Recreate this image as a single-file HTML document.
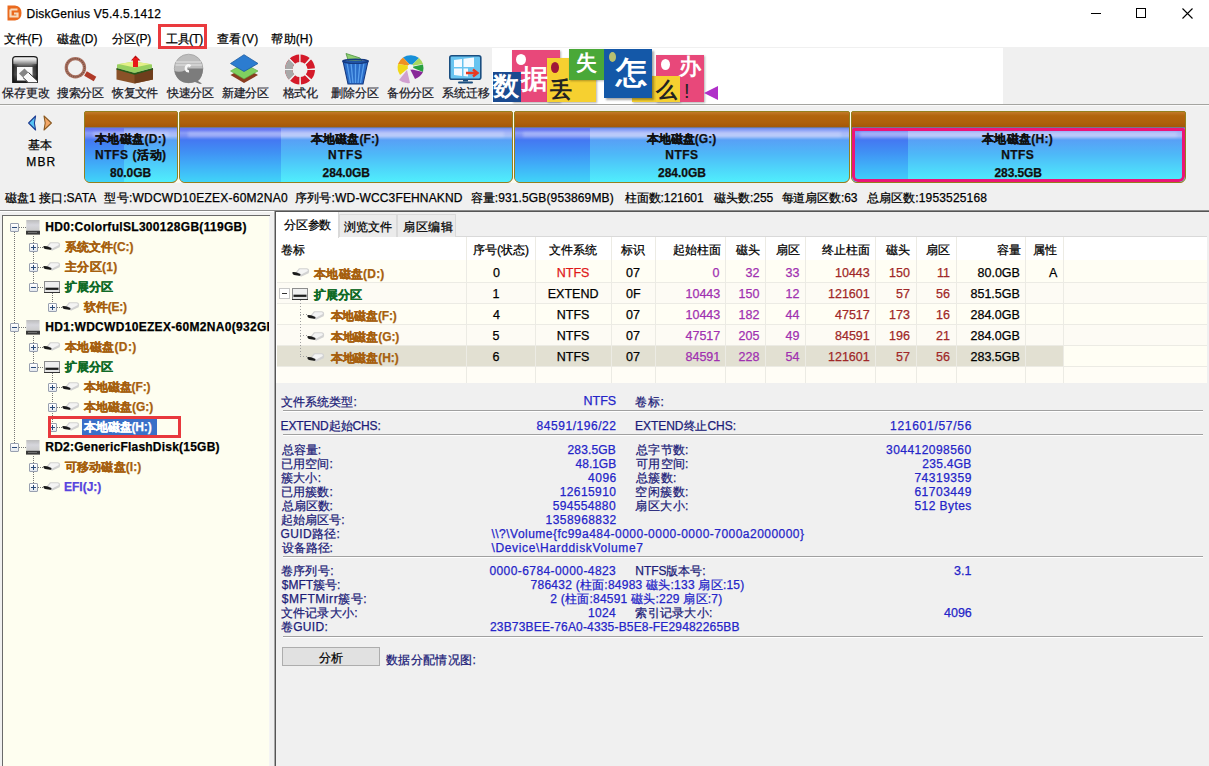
<!DOCTYPE html>
<html><head><meta charset="utf-8">
<style>
*{box-sizing:border-box;margin:0;padding:0}
html,body{width:1209px;height:766px;overflow:hidden;background:#f0f0f0;font-family:"Liberation Sans",sans-serif;font-size:12px;color:#000}
body{position:relative}
.a{position:absolute}
.t{position:absolute;white-space:nowrap;line-height:14px;font-size:12px;-webkit-text-stroke:0.25px currentColor}
svg{position:absolute;overflow:visible}
.part{position:absolute;top:111px;height:72px;border:1px solid #94801e;border-radius:2px 2px 6px 6px;overflow:hidden;background:#b6650f}
.part .hd{position:absolute;left:0;top:0;right:0;height:16px;background:linear-gradient(#c27a2a,#b2660e 25%,#ae600c 70%,#a45808);border-bottom:1px solid #707890}
.part .bd{position:absolute;left:0;top:16px;right:0;bottom:0;background:linear-gradient(#7088e8 0px,#8aa0f6 2px,#a8b8f8 5px,#a8c0f8 8px,#58a0f6 12px,#4eb8f8 26px,#4ed4fa 40px,#50eefc 54px)}
.part .used{position:absolute;left:0;top:16px;bottom:0;background:linear-gradient(#6870ee 0px,#6a7af2 2px,#8a9cf6 5px,#7a90f4 8px,#4478f2 12px,#4090f4 24px,#40b0f8 38px,#40d4f8 54px)}
.part .hl{position:absolute;left:8px;right:8px;top:20px;height:5px;background:rgba(220,230,255,.35);filter:blur(1.5px)}
.row{position:absolute;left:277px;width:930px;height:21px}
.vl{position:absolute;width:1px;background:#ecebe4}
.hl1{position:absolute;height:1px;background:#ecebe4}
.etch{position:absolute;left:283px;width:920px;height:2px;border-top:1px solid #a0a0a0;border-bottom:1px solid #fff}
.xb{position:absolute;width:9px;height:9px;border:1px solid #98a0b0;background:linear-gradient(#fff,#e4e8ee);border-radius:1px}
.xb:before{content:"";position:absolute;left:1px;top:3px;width:5px;height:1px;background:#2a4a78}
.xb.p:after{content:"";position:absolute;left:3px;top:1px;width:1px;height:5px;background:#2a4a78}
.dv{position:absolute;width:1px;background-image:linear-gradient(#777 50%,transparent 50%);background-size:1px 2px}
.dh{position:absolute;height:1px;background-image:linear-gradient(90deg,#777 50%,transparent 50%);background-size:2px 1px}
</style></head><body>
<!-- title + menu -->
<div class="a" style="left:0;top:0;width:1209px;height:47px;background:#fff"></div>
<svg style="left:7px;top:5px" width="15" height="16" viewBox="0 0 15 16">
<path d="M0.5 0.5 H8 Q14.5 1 14.5 8 Q14.5 15 8 15.5 H0.5 Z" fill="#ea6a1e"/>
<path d="M3.5 4.5 H10.5 M3.5 4.5 V11.5 H10.5 V8.5 H7" stroke="#f6dcc0" stroke-width="2.2" fill="none"/>
</svg>
<div class="a" style="left:1091px;top:13px;width:10px;height:1px;background:#000"></div>
<div class="a" style="left:1136px;top:8px;width:10px;height:10px;border:1px solid #000"></div>
<svg style="left:1182px;top:8px" width="11" height="11"><path d="M0.5 0.5 L10.5 10.5 M10.5 0.5 L0.5 10.5" stroke="#000" stroke-width="1.1"/></svg>
<div class="a" style="left:158px;top:24px;width:49px;height:25px;border:3px solid #ea3a3e"></div>

<!-- toolbar -->
<div class="a" style="left:0;top:104px;width:1209px;height:1px;background:#a4a4a0"></div>
<div class="a" style="left:0;top:105px;width:1209px;height:1px;background:#fafafa"></div>
<!-- save -->
<svg style="left:12px;top:56px" width="26" height="27" viewBox="0 0 26 27">
<defs><linearGradient id="gs" x1="0" y1="0" x2="0" y2="1"><stop offset="0" stop-color="#fafafa"/><stop offset=".12" stop-color="#e0e0e0"/><stop offset=".38" stop-color="#505050"/><stop offset=".7" stop-color="#6a6a6a"/><stop offset="1" stop-color="#202020"/></linearGradient>
<linearGradient id="gs2" x1="0" y1="0" x2="1" y2="0"><stop offset="0" stop-color="#000" stop-opacity=".5"/><stop offset=".25" stop-color="#000" stop-opacity="0"/><stop offset=".75" stop-color="#000" stop-opacity="0"/><stop offset="1" stop-color="#000" stop-opacity=".5"/></linearGradient></defs>
<path d="M0.7 3.2 Q0.7 0.7 3.5 0.7 H21.8 Q25.3 0.7 25.3 3.2 V26.3 H0.7 Z" fill="url(#gs)" stroke="#1a1a1a" stroke-width="1.2"/>
<rect x="1" y="8" width="24" height="18" fill="url(#gs2)"/>
<rect x="5" y="11" width="15.5" height="13.5" fill="#f8f8f8"/>
<path d="M7 17.5 L12.5 12.5 L16.5 16.5 L11 21.5 Z" fill="#858585"/>
<path d="M11 21.5 L16.5 16.5 L25 24.5 V26.3 H15.5 Z" fill="#fafafa"/>
<path d="M16.5 16.5 L25 24.5 M11 21.5 L15.8 26" stroke="#2a2a2a" stroke-width="1"/>
</svg>
<!-- search -->
<svg style="left:64px;top:56px" width="33" height="26" viewBox="0 0 33 26">
<circle cx="11.4" cy="11.7" r="9.1" fill="none" stroke="#a87060" stroke-width="3.3"/>
<circle cx="11.4" cy="11.7" r="9.1" fill="none" stroke="#704838" stroke-width="1.2" stroke-dasharray="1 1.2"/>
<path d="M21.5 17.5 L31 23" stroke="#b03a28" stroke-width="5.2"/>
</svg>
<!-- recover -->
<svg style="left:116px;top:55px" width="38" height="30" viewBox="0 0 38 30">
<path d="M0.5 13.5 L18.5 18.5 L37 13.5 V24.5 L18.5 28.5 L0.5 24.5 Z" fill="#8a5228"/>
<path d="M18.5 18.5 L37 13.5 V24.5 L18.5 28.5 Z" fill="#6e3e1c"/>
<path d="M1 9.5 L18 6.5 L36 9.5 L36 13 L18.5 18 L1 13 Z" fill="#98d060"/>
<path d="M2.5 9 L18 6.5 L35 9 L18.5 12.5 Z" fill="#e4f088"/>
<path d="M0.5 13.8 L18.5 18.8 L37 13.8" fill="none" stroke="#245a18" stroke-width="1.6"/>
<path d="M15 5.5 L19.5 0.5 L24.5 5.5 Z" fill="#b81010"/>
<rect x="17" y="3" width="5" height="9" fill="#e81818"/>
</svg>
<!-- quick -->
<svg style="left:174px;top:54px" width="31" height="31" viewBox="0 0 31 31">
<circle cx="14.6" cy="14.5" r="14.3" fill="#bdbdbd" stroke="#a0a0a0" stroke-width=".8"/>
<path d="M2 8 H27 M1.5 11 H28" stroke="#d8d8d8" stroke-width="1.5"/>
<path d="M0.5 17 Q3 18 8 17.5 L12 16 V14.5 H29 Q29 23 24 27 L28 29.5 L26 30 L21 28 Q18 29 14.6 29 Q3 29 0.5 17 Z" fill="#7c7c7c"/>
<path d="M16.5 12.2 Q15 11 13.5 11.5 Q11.5 12.5 12 15.5 Q12.8 17.5 15 17.2" fill="none" stroke="#f8f8f8" stroke-width="2.5"/>
</svg>
<!-- new -->
<svg style="left:230px;top:54px" width="29" height="30" viewBox="0 0 29 30">
<path d="M14 13.5 L28 21 L14 29 L0.5 21 Z" fill="#8a3c20"/>
<path d="M14 9.5 L28 17 L14 25 L0.5 17 Z" fill="#80d060" stroke="#58a840" stroke-width=".6"/>
<path d="M14 0.7 L28 9.5 L14 17.5 L0.5 9.5 Z" fill="#2c7cd0" stroke="#1a5aa0" stroke-width=".8"/>
</svg>
<!-- format -->
<svg style="left:284px;top:54px" width="32" height="32" viewBox="0 0 32 32">
<g transform="rotate(-90 16 15.5)">
<circle cx="16" cy="15.5" r="11.3" fill="none" stroke="#d41a2a" stroke-width="7.4" stroke-dasharray="7.87 1"/>
</g>
<path d="M4.7 15.5 A11.3 11.3 0 0 1 8 7.5 M4.7 15.5 A11.3 11.3 0 0 0 8 23.5" fill="none" stroke="#a8a8a8" stroke-width="7.4"/>
<path d="M16 0 V31 M0.5 15.5 H31.5 M5 4.5 L27 26.5 M27 4.5 L5 26.5" stroke="#f0f0f0" stroke-width="1.1"/>
</svg>
<!-- delete -->
<svg style="left:342px;top:53px" width="27" height="32" viewBox="0 0 27 32">
<path d="M4 0.5 L18 5 L21 10 L7 10 Z" fill="#90d070" stroke="#4a9040" stroke-width=".8"/>
<path d="M1 8 H26 L21 31 H6 Z" fill="#2a6cc8"/>
<path d="M5 10 L8.5 30 M9 10 L11 30 M13.5 10 V30 M18 10 L16 30 M22 10 L18.5 30" stroke="#5aa0ec" stroke-width="1.3"/>
<path d="M1 8 H26 L21 31 H6 Z" fill="none" stroke="#163a80" stroke-width="1.1"/>
<ellipse cx="13.5" cy="8.3" rx="12.6" ry="2" fill="none" stroke="#163a80" stroke-width="1.6"/>
</svg>
<!-- backup -->
<svg style="left:396px;top:55px" width="29" height="30" viewBox="0 0 29 30">
<path d="M15 11 L7 2.5 A14 14 0 0 1 23 3 Z" fill="#1890d8"/>
<path d="M15 11 L7 2.5 A14 14 0 0 0 2 9 Z" fill="#f09020"/>
<path d="M15 11 L2 9 A14 14 0 0 0 4 20 Z" fill="#f0d818"/>
<path d="M15 11 L23 3 A14 14 0 0 1 27 9 Z" fill="#a8d860"/>
<path d="M15 12 L27 9.5 A14 14 0 0 1 27 17 Z" fill="#28a040"/>
<path d="M14 14 L27 17 A14 14 0 0 1 19 24 Z" fill="#882898"/>
<path d="M11 15 L14 28 A14 14 0 0 1 3 25 Z" fill="#d0a0d0"/>
<circle cx="14.5" cy="12" r="2.8" fill="#f4f4f4"/>
</svg>
<!-- migrate -->
<svg style="left:449px;top:55px" width="33" height="29" viewBox="0 0 33 29">
<rect x="0.8" y="0.8" width="31" height="23.5" rx="2" fill="#68c4f0" stroke="#1a4e80" stroke-width="1.6"/>
<path d="M5 5 L13 4 V12 H5 Z M14.5 3.8 L25 2.5 V12 H14.5 Z M5 13.5 H13 V21 L5 20 Z M14.5 13.5 H19 V21.5 L14.5 21 Z" fill="#f4faff"/>
<path d="M17 18 H27.5 M24 14.5 L28.5 18 L24 21.5" stroke="#e83a20" stroke-width="2.4" fill="none"/>
<path d="M14 24.5 H19 V26.5 H14 Z" fill="#1a4e80"/><rect x="9" y="26.5" width="15" height="2" rx="1" fill="#1a4e80"/>
</svg>

<!-- banner -->
<div class="a" style="left:492px;top:48px;width:511px;height:56px;background:#fff"></div>
<div class="a" style="left:512px;top:50px;width:48px;height:52px;background:#e8487a;box-shadow:1px 1px 2px rgba(0,0,0,.3)"></div>
<div class="a" style="left:516px;top:54px;width:10px;height:11px;border-radius:50%;background:#fff"></div>
<div class="a" style="left:493px;top:72px;width:28px;height:30px;background:#1a4a90"></div>
<div class="a" style="left:547px;top:58px;width:49px;height:44px;background:#f6d030;box-shadow:1px 1px 2px rgba(0,0,0,.3)"></div>
<div class="a" style="left:551px;top:62px;width:8px;height:11px;border-radius:50%;background:#a01838"></div>
<div class="a" style="left:569px;top:49px;width:35px;height:31px;background:#4aa838;box-shadow:1px 1px 2px rgba(0,0,0,.3)"></div>
<div class="a" style="left:632px;top:76px;width:48px;height:26px;background:#f6d030;box-shadow:1px 1px 2px rgba(0,0,0,.3)"></div>
<div class="a" style="left:656px;top:55px;width:48px;height:47px;background:#e8487a;box-shadow:1px 1px 2px rgba(0,0,0,.3)"></div>
<div class="a" style="left:656px;top:76px;width:24px;height:26px;background:#f6d030"></div>
<div class="a" style="left:661px;top:59px;width:9px;height:11px;border-radius:50%;background:#fff"></div>
<div class="a" style="left:604px;top:49px;width:48px;height:49px;background:#1458a8;box-shadow:2px 2px 2px rgba(0,0,0,.35)"></div>
<div class="a" style="left:609px;top:52px;width:7px;height:10px;border-radius:50%;background:#b8c070"></div>
<svg style="left:704px;top:86px" width="14" height="14"><path d="M0 7 L14 0 V14 Z" fill="#b030c8"/></svg>
<div class="a" style="left:493px;top:71px;font-size:26px;line-height:30px;color:#fff;font-weight:bold">数</div>
<div class="a" style="left:521px;top:63px;font-size:27px;line-height:32px;color:#fff;font-weight:bold">据</div>
<div class="a" style="left:550px;top:77px;font-size:22px;line-height:26px;color:#222;font-weight:bold">丢</div>
<div class="a" style="left:576px;top:50px;font-size:21px;line-height:26px;color:#fff;font-weight:bold">失</div>
<div class="a" style="left:616px;top:55px;font-size:31px;line-height:36px;color:#fff;font-weight:bold">怎</div>
<div class="a" style="left:656px;top:78px;font-size:21px;line-height:24px;color:#222;font-weight:bold">么</div>
<div class="a" style="left:679px;top:54px;font-size:22px;line-height:26px;color:#fff;font-weight:bold">办</div>
<div class="a" style="left:684px;top:79px;font-size:20px;line-height:24px;color:#222">!</div>

<!-- disk map -->
<svg style="left:27px;top:115px" width="28" height="17" viewBox="0 0 28 17">
<path d="M8.6 1 L1.6 8 L8.6 15 L7.4 8 Z" fill="#58c4f4" stroke="#1c3c92" stroke-width="1.1" stroke-linejoin="round"/>
<path d="M17 1 L24.4 8 L17 15 L18.2 8 Z" fill="#f4a868" stroke="#8a5a22" stroke-width="1.1" stroke-linejoin="round"/>
</svg>
<div class="a" style="left:176px;top:111px;width:5px;height:72px;background:#fbfbf0"></div><div class="a" style="left:511px;top:111px;width:5px;height:72px;background:#fbfbf0"></div><div class="a" style="left:848px;top:111px;width:5px;height:72px;background:#fbfbf0"></div>
<div class="part" style="left:84px;width:94px"><div class="hd"></div><div class="bd"></div><div class="used" style="width:39px"></div><div class="hl"></div></div>
<div class="part" style="left:179px;width:334px"><div class="hd"></div><div class="bd"></div><div class="used" style="width:101px"></div><div class="hl"></div></div>
<div class="part" style="left:514px;width:336px"><div class="hd"></div><div class="bd"></div><div class="used" style="width:75px"></div><div class="hl"></div></div>
<div class="part" style="left:851px;width:335px"><div class="hd"></div><div class="bd"></div><div class="used" style="width:56px"></div><div class="hl"></div>
<div class="a" style="left:0;top:16px;right:0;bottom:0;border:3px solid #ec1478;border-radius:2px 2px 6px 6px"></div></div>

<div class="a" style="left:0;top:210px;width:1209px;height:1px;background:#8a8a8a"></div>
<div class="a" style="left:0;top:211px;width:1209px;height:1px;background:#fff"></div>

<!-- tree panel -->
<div class="a" style="left:2px;top:215px;width:268px;height:551px;background:#fefef0;border-left:1px solid #6a6a6a;border-top:1px solid #6a6a6a"></div>
<div class="a" style="left:269px;top:216px;width:1px;height:550px;background:#f4f4f4"></div>
<div class="a" style="left:274px;top:211px;width:1px;height:555px;background:#a8a8a8"></div><div class="a" style="left:275px;top:211px;width:1px;height:555px;background:#555"></div>
<div class="dv" style="left:14px;top:232px;height:211px"></div>
<div class="dv" style="left:33px;top:236px;height:47px"></div>
<div class="dv" style="left:33px;top:336px;height:27px"></div>
<div class="dv" style="left:33px;top:456px;height:27px"></div>
<div class="dv" style="left:52px;top:293px;height:10px"></div>
<div class="dv" style="left:52px;top:373px;height:50px"></div>
<div class="xb" style="left:10px;top:223px"></div>
<div class="dh" style="left:19px;top:227px;width:7px"></div>
<svg style="left:26px;top:220px" width="14" height="15" viewBox="0 0 14 15"><defs><linearGradient id="gb1" x1="0" y1="0" x2="0" y2="1"><stop offset="0" stop-color="#bcbcbc"/><stop offset=".45" stop-color="#d6d6dc"/><stop offset="1" stop-color="#cacaca"/></linearGradient></defs><rect x="0.3" y="0" width="13.2" height="11" fill="url(#gb1)"/><rect x="0" y="10.8" width="14" height="3.8" fill="#3a3a3a"/><rect x="2" y="12" width="9" height="1" fill="#707070"/></svg>
<div class="xb p" style="left:29px;top:243px"></div>
<div class="dh" style="left:38px;top:247px;width:7px"></div>
<svg style="left:43px;top:242px" width="18" height="9" viewBox="0 0 18 9"><path d="M7 0.3 H15 Q17.2 0.6 17.2 3 L16.6 5.2 L9 8.7 L3.6 4.4 Z" fill="#d2d2d2"/><path d="M7.8 1.2 H14.6 Q16 1.5 15.8 3 L9.2 6.4 L5.4 3.9 Z" fill="#f4f4f4"/><path d="M0.3 4.6 Q0.3 4 1.2 4 L4 4.3 L8.4 6 L8.3 7.4 Q8 7.9 7 7.7 L2 6.9 Q0.3 6.4 0.3 4.6 Z" fill="#1a1a1a"/></svg>
<div class="xb p" style="left:29px;top:263px"></div>
<div class="dh" style="left:38px;top:267px;width:7px"></div>
<svg style="left:43px;top:262px" width="18" height="9" viewBox="0 0 18 9"><path d="M7 0.3 H15 Q17.2 0.6 17.2 3 L16.6 5.2 L9 8.7 L3.6 4.4 Z" fill="#d2d2d2"/><path d="M7.8 1.2 H14.6 Q16 1.5 15.8 3 L9.2 6.4 L5.4 3.9 Z" fill="#f4f4f4"/><path d="M0.3 4.6 Q0.3 4 1.2 4 L4 4.3 L8.4 6 L8.3 7.4 Q8 7.9 7 7.7 L2 6.9 Q0.3 6.4 0.3 4.6 Z" fill="#1a1a1a"/></svg>
<div class="xb" style="left:29px;top:283px"></div>
<div class="dh" style="left:38px;top:287px;width:7px"></div>
<svg style="left:44px;top:281px" width="16" height="12" viewBox="0 0 16 12"><rect x="0.5" y="0.5" width="15" height="11" fill="#e6e6e6" stroke="#8c8c8c"/><rect x="1" y="1" width="14" height="5" fill="#f0f0f0"/><rect x="1.5" y="6.7" width="13" height="2.2" fill="#1e1e1e"/><path d="M0 11.5 H16" stroke="#333" stroke-width="1"/></svg>
<div class="xb p" style="left:48px;top:303px"></div>
<div class="dh" style="left:57px;top:307px;width:7px"></div>
<svg style="left:62px;top:302px" width="18" height="9" viewBox="0 0 18 9"><path d="M7 0.3 H15 Q17.2 0.6 17.2 3 L16.6 5.2 L9 8.7 L3.6 4.4 Z" fill="#d2d2d2"/><path d="M7.8 1.2 H14.6 Q16 1.5 15.8 3 L9.2 6.4 L5.4 3.9 Z" fill="#f4f4f4"/><path d="M0.3 4.6 Q0.3 4 1.2 4 L4 4.3 L8.4 6 L8.3 7.4 Q8 7.9 7 7.7 L2 6.9 Q0.3 6.4 0.3 4.6 Z" fill="#1a1a1a"/></svg>
<div class="xb" style="left:10px;top:323px"></div>
<div class="dh" style="left:19px;top:327px;width:7px"></div>
<svg style="left:26px;top:320px" width="14" height="15" viewBox="0 0 14 15"><defs><linearGradient id="gb2" x1="0" y1="0" x2="0" y2="1"><stop offset="0" stop-color="#bcbcbc"/><stop offset=".45" stop-color="#d6d6dc"/><stop offset="1" stop-color="#cacaca"/></linearGradient></defs><rect x="0.3" y="0" width="13.2" height="11" fill="url(#gb2)"/><rect x="0" y="10.8" width="14" height="3.8" fill="#3a3a3a"/><rect x="2" y="12" width="9" height="1" fill="#707070"/></svg>
<div class="xb p" style="left:29px;top:343px"></div>
<div class="dh" style="left:38px;top:347px;width:7px"></div>
<svg style="left:43px;top:342px" width="18" height="9" viewBox="0 0 18 9"><path d="M7 0.3 H15 Q17.2 0.6 17.2 3 L16.6 5.2 L9 8.7 L3.6 4.4 Z" fill="#d2d2d2"/><path d="M7.8 1.2 H14.6 Q16 1.5 15.8 3 L9.2 6.4 L5.4 3.9 Z" fill="#f4f4f4"/><path d="M0.3 4.6 Q0.3 4 1.2 4 L4 4.3 L8.4 6 L8.3 7.4 Q8 7.9 7 7.7 L2 6.9 Q0.3 6.4 0.3 4.6 Z" fill="#1a1a1a"/></svg>
<div class="xb" style="left:29px;top:363px"></div>
<div class="dh" style="left:38px;top:367px;width:7px"></div>
<svg style="left:44px;top:361px" width="16" height="12" viewBox="0 0 16 12"><rect x="0.5" y="0.5" width="15" height="11" fill="#e6e6e6" stroke="#8c8c8c"/><rect x="1" y="1" width="14" height="5" fill="#f0f0f0"/><rect x="1.5" y="6.7" width="13" height="2.2" fill="#1e1e1e"/><path d="M0 11.5 H16" stroke="#333" stroke-width="1"/></svg>
<div class="xb p" style="left:48px;top:383px"></div>
<div class="dh" style="left:57px;top:387px;width:7px"></div>
<svg style="left:62px;top:382px" width="18" height="9" viewBox="0 0 18 9"><path d="M7 0.3 H15 Q17.2 0.6 17.2 3 L16.6 5.2 L9 8.7 L3.6 4.4 Z" fill="#d2d2d2"/><path d="M7.8 1.2 H14.6 Q16 1.5 15.8 3 L9.2 6.4 L5.4 3.9 Z" fill="#f4f4f4"/><path d="M0.3 4.6 Q0.3 4 1.2 4 L4 4.3 L8.4 6 L8.3 7.4 Q8 7.9 7 7.7 L2 6.9 Q0.3 6.4 0.3 4.6 Z" fill="#1a1a1a"/></svg>
<div class="xb p" style="left:48px;top:403px"></div>
<div class="dh" style="left:57px;top:407px;width:7px"></div>
<svg style="left:62px;top:402px" width="18" height="9" viewBox="0 0 18 9"><path d="M7 0.3 H15 Q17.2 0.6 17.2 3 L16.6 5.2 L9 8.7 L3.6 4.4 Z" fill="#d2d2d2"/><path d="M7.8 1.2 H14.6 Q16 1.5 15.8 3 L9.2 6.4 L5.4 3.9 Z" fill="#f4f4f4"/><path d="M0.3 4.6 Q0.3 4 1.2 4 L4 4.3 L8.4 6 L8.3 7.4 Q8 7.9 7 7.7 L2 6.9 Q0.3 6.4 0.3 4.6 Z" fill="#1a1a1a"/></svg>
<div class="xb p" style="left:48px;top:423px"></div>
<div class="dh" style="left:57px;top:427px;width:7px"></div>
<svg style="left:62px;top:422px" width="18" height="9" viewBox="0 0 18 9"><path d="M7 0.3 H15 Q17.2 0.6 17.2 3 L16.6 5.2 L9 8.7 L3.6 4.4 Z" fill="#d2d2d2"/><path d="M7.8 1.2 H14.6 Q16 1.5 15.8 3 L9.2 6.4 L5.4 3.9 Z" fill="#f4f4f4"/><path d="M0.3 4.6 Q0.3 4 1.2 4 L4 4.3 L8.4 6 L8.3 7.4 Q8 7.9 7 7.7 L2 6.9 Q0.3 6.4 0.3 4.6 Z" fill="#1a1a1a"/></svg>
<div class="xb" style="left:10px;top:443px"></div>
<div class="dh" style="left:19px;top:447px;width:7px"></div>
<svg style="left:26px;top:440px" width="14" height="15" viewBox="0 0 14 15"><defs><linearGradient id="gb3" x1="0" y1="0" x2="0" y2="1"><stop offset="0" stop-color="#bcbcbc"/><stop offset=".45" stop-color="#d6d6dc"/><stop offset="1" stop-color="#cacaca"/></linearGradient></defs><rect x="0.3" y="0" width="13.2" height="11" fill="url(#gb3)"/><rect x="0" y="10.8" width="14" height="3.8" fill="#3a3a3a"/><rect x="2" y="12" width="9" height="1" fill="#707070"/></svg>
<div class="xb p" style="left:29px;top:463px"></div>
<div class="dh" style="left:38px;top:467px;width:7px"></div>
<svg style="left:43px;top:462px" width="18" height="9" viewBox="0 0 18 9"><path d="M7 0.3 H15 Q17.2 0.6 17.2 3 L16.6 5.2 L9 8.7 L3.6 4.4 Z" fill="#d2d2d2"/><path d="M7.8 1.2 H14.6 Q16 1.5 15.8 3 L9.2 6.4 L5.4 3.9 Z" fill="#f4f4f4"/><path d="M0.3 4.6 Q0.3 4 1.2 4 L4 4.3 L8.4 6 L8.3 7.4 Q8 7.9 7 7.7 L2 6.9 Q0.3 6.4 0.3 4.6 Z" fill="#1a1a1a"/></svg>
<div class="xb p" style="left:29px;top:483px"></div>
<div class="dh" style="left:38px;top:487px;width:7px"></div>
<svg style="left:43px;top:482px" width="18" height="9" viewBox="0 0 18 9"><path d="M7 0.3 H15 Q17.2 0.6 17.2 3 L16.6 5.2 L9 8.7 L3.6 4.4 Z" fill="#d2d2d2"/><path d="M7.8 1.2 H14.6 Q16 1.5 15.8 3 L9.2 6.4 L5.4 3.9 Z" fill="#f4f4f4"/><path d="M0.3 4.6 Q0.3 4 1.2 4 L4 4.3 L8.4 6 L8.3 7.4 Q8 7.9 7 7.7 L2 6.9 Q0.3 6.4 0.3 4.6 Z" fill="#1a1a1a"/></svg>
<div class="a" style="left:82px;top:419px;width:75px;height:16px;background:#3a70c8"></div>
<div class="a" style="left:48px;top:416px;width:133px;height:22px;border:3px solid #e8383d;z-index:6"></div>
<div class="a" style="left:275px;top:211px;width:934px;height:1px;background:#555"></div>
<div class="a" style="left:276px;top:236px;width:931px;height:147px;background:#fff"></div>
<div class="a" style="left:339px;top:214px;width:58px;height:23px;background:#ebebeb;border:1px solid #d9d9d9;border-bottom:none"></div>
<div class="a" style="left:397px;top:214px;width:59px;height:23px;background:#ebebeb;border:1px solid #d9d9d9;border-bottom:none"></div>
<div class="a" style="left:276px;top:212px;width:63px;height:26px;background:#fff;border-right:1px solid #d9d9d9"></div>
<div class="a" style="left:456px;top:236px;width:751px;height:1px;background:#d9d9d9"></div>
<div class="a" style="left:277px;top:260px;width:930px;height:22px;background:#fffef4"></div>
<div class="a" style="left:277px;top:282px;width:930px;height:21px;background:#fdfbf4"></div>
<div class="a" style="left:277px;top:303px;width:930px;height:21px;background:#fffef4"></div>
<div class="a" style="left:277px;top:324px;width:930px;height:21px;background:#fdfbf4"></div>
<div class="a" style="left:277px;top:345px;width:786px;height:21px;background:#e2e0d2"></div>
<div class="a" style="left:1063px;top:345px;width:144px;height:21px;background:#fffef4"></div>
<div class="a" style="left:277px;top:366px;width:930px;height:17px;background:#fffdf6"></div>
<div class="hl1" style="left:277px;top:282px;width:930px"></div>
<div class="hl1" style="left:277px;top:303px;width:930px"></div>
<div class="hl1" style="left:277px;top:324px;width:930px"></div>
<div class="hl1" style="left:277px;top:345px;width:930px"></div>
<div class="hl1" style="left:277px;top:366px;width:930px"></div>
<div class="vl" style="left:466px;top:237px;height:146px"></div>
<div class="vl" style="left:535px;top:237px;height:146px"></div>
<div class="vl" style="left:611px;top:237px;height:146px"></div>
<div class="vl" style="left:655px;top:237px;height:146px"></div>
<div class="vl" style="left:725px;top:237px;height:146px"></div>
<div class="vl" style="left:765px;top:237px;height:146px"></div>
<div class="vl" style="left:805px;top:237px;height:146px"></div>
<div class="vl" style="left:875px;top:237px;height:146px"></div>
<div class="vl" style="left:916px;top:237px;height:146px"></div>
<div class="vl" style="left:956px;top:237px;height:146px"></div>
<div class="vl" style="left:1025px;top:237px;height:146px"></div>
<div class="vl" style="left:1063px;top:237px;height:146px"></div>
<div class="a" style="left:1207px;top:236px;width:2px;height:147px;background:#f0f0f0"></div>
<svg style="left:292px;top:268px" width="18" height="9" viewBox="0 0 18 9"><path d="M7 0.3 H15 Q17.2 0.6 17.2 3 L16.6 5.2 L9 8.7 L3.6 4.4 Z" fill="#d2d2d2"/><path d="M7.8 1.2 H14.6 Q16 1.5 15.8 3 L9.2 6.4 L5.4 3.9 Z" fill="#f4f4f4"/><path d="M0.3 4.6 Q0.3 4 1.2 4 L4 4.3 L8.4 6 L8.3 7.4 Q8 7.9 7 7.7 L2 6.9 Q0.3 6.4 0.3 4.6 Z" fill="#1a1a1a"/></svg>
<div class="a" style="left:279px;top:288px;width:11px;height:11px;border:1px solid #c8c8c8;background:#fff"></div><div class="a" style="left:282px;top:293px;width:5px;height:1px;background:#333"></div>
<svg style="left:292px;top:288px" width="16" height="12" viewBox="0 0 16 12"><rect x="0.5" y="0.5" width="15" height="11" fill="#e6e6e6" stroke="#8c8c8c"/><rect x="1" y="1" width="14" height="5" fill="#f0f0f0"/><rect x="1.5" y="6.7" width="13" height="2.2" fill="#1e1e1e"/><path d="M0 11.5 H16" stroke="#333" stroke-width="1"/></svg>
<div class="dv" style="left:300px;top:300px;height:57px;background-image:linear-gradient(#a0a0a0 50%,transparent 50%);background-size:1px 3px"></div>
<div class="dh" style="left:300px;top:314px;width:7px;background-image:linear-gradient(90deg,#a0a0a0 50%,transparent 50%);background-size:3px 1px"></div>
<svg style="left:307px;top:311px" width="18" height="9" viewBox="0 0 18 9"><path d="M7 0.3 H15 Q17.2 0.6 17.2 3 L16.6 5.2 L9 8.7 L3.6 4.4 Z" fill="#d2d2d2"/><path d="M7.8 1.2 H14.6 Q16 1.5 15.8 3 L9.2 6.4 L5.4 3.9 Z" fill="#f4f4f4"/><path d="M0.3 4.6 Q0.3 4 1.2 4 L4 4.3 L8.4 6 L8.3 7.4 Q8 7.9 7 7.7 L2 6.9 Q0.3 6.4 0.3 4.6 Z" fill="#1a1a1a"/></svg>
<div class="dh" style="left:300px;top:335px;width:7px;background-image:linear-gradient(90deg,#a0a0a0 50%,transparent 50%);background-size:3px 1px"></div>
<svg style="left:307px;top:332px" width="18" height="9" viewBox="0 0 18 9"><path d="M7 0.3 H15 Q17.2 0.6 17.2 3 L16.6 5.2 L9 8.7 L3.6 4.4 Z" fill="#d2d2d2"/><path d="M7.8 1.2 H14.6 Q16 1.5 15.8 3 L9.2 6.4 L5.4 3.9 Z" fill="#f4f4f4"/><path d="M0.3 4.6 Q0.3 4 1.2 4 L4 4.3 L8.4 6 L8.3 7.4 Q8 7.9 7 7.7 L2 6.9 Q0.3 6.4 0.3 4.6 Z" fill="#1a1a1a"/></svg>
<div class="dh" style="left:300px;top:356px;width:7px;background-image:linear-gradient(90deg,#a0a0a0 50%,transparent 50%);background-size:3px 1px"></div>
<svg style="left:307px;top:353px" width="18" height="9" viewBox="0 0 18 9"><path d="M7 0.3 H15 Q17.2 0.6 17.2 3 L16.6 5.2 L9 8.7 L3.6 4.4 Z" fill="#d2d2d2"/><path d="M7.8 1.2 H14.6 Q16 1.5 15.8 3 L9.2 6.4 L5.4 3.9 Z" fill="#f4f4f4"/><path d="M0.3 4.6 Q0.3 4 1.2 4 L4 4.3 L8.4 6 L8.3 7.4 Q8 7.9 7 7.7 L2 6.9 Q0.3 6.4 0.3 4.6 Z" fill="#1a1a1a"/></svg>
<div class="etch" style="top:410px"></div>
<div class="etch" style="top:434px"></div>
<div class="etch" style="top:556px"></div>
<div class="etch" style="top:636px"></div>
<div class="a" style="left:282px;top:647px;width:98px;height:19px;background:#e1e1e1;border:1px solid #adadad"></div>
<div class="t" style="left:26.50px;top:7.00px;color:#000;letter-spacing:0.238px;">DiskGenius V5.4.5.1412</div>
<div class="t" style="left:4.00px;top:32.00px;color:#000;letter-spacing:-0.200px;">文件(F)</div>
<div class="t" style="left:57.00px;top:32.00px;color:#000;letter-spacing:-0.050px;">磁盘(D)</div>
<div class="t" style="left:112.20px;top:32.00px;color:#000;letter-spacing:-0.250px;">分区(P)</div>
<div class="t" style="left:166.00px;top:32.00px;color:#000;letter-spacing:-0.500px;">工具(T)</div>
<div class="t" style="left:217.20px;top:32.00px;color:#000;letter-spacing:0.250px;">查看(V)</div>
<div class="t" style="left:271.40px;top:32.00px;color:#000;letter-spacing:0.150px;">帮助(H)</div>
<div class="t" style="left:2.00px;top:86.00px;color:#1a1a28;">保存更改</div>
<div class="t" style="left:56.90px;top:86.00px;color:#1a1a28;letter-spacing:-0.333px;">搜索分区</div>
<div class="t" style="left:112.20px;top:86.00px;color:#1a1a28;letter-spacing:-0.667px;">恢复文件</div>
<div class="t" style="left:167.00px;top:86.00px;color:#1a1a28;letter-spacing:-0.300px;">快速分区</div>
<div class="t" style="left:221.90px;top:86.00px;color:#1a1a28;letter-spacing:-0.300px;">新建分区</div>
<div class="t" style="left:283.00px;top:86.00px;color:#1a1a28;letter-spacing:-0.750px;">格式化</div>
<div class="t" style="left:330.90px;top:86.00px;color:#1a1a28;letter-spacing:-0.033px;">删除分区</div>
<div class="t" style="left:387.00px;top:86.00px;color:#1a1a28;letter-spacing:-0.367px;">备份分区</div>
<div class="t" style="left:442.00px;top:86.00px;color:#1a1a28;">系统迁移</div>
<div class="t" style="left:28.00px;top:138.00px;color:#000;">基本</div>
<div class="t" style="left:26.30px;top:155.00px;color:#000;letter-spacing:1.150px;">MBR</div>
<div class="t" style="left:95.10px;top:132.00px;color:#101010;font-weight:bold;letter-spacing:0.329px;">本地磁盘(D:)</div>
<div class="t" style="left:95.00px;top:148.30px;color:#101010;font-weight:bold;letter-spacing:0.550px;">NTFS (活动)</div>
<div class="t" style="left:110.00px;top:166.00px;color:#101010;font-weight:bold;letter-spacing:-0.020px;">80.0GB</div>
<div class="t" style="left:311.00px;top:132.00px;color:#101010;font-weight:bold;letter-spacing:0.114px;">本地磁盘(F:)</div>
<div class="t" style="left:328.00px;top:148.30px;color:#101010;font-weight:bold;letter-spacing:1.000px;">NTFS</div>
<div class="t" style="left:322.60px;top:166.00px;color:#101010;font-weight:bold;letter-spacing:-0.100px;">284.0GB</div>
<div class="t" style="left:646.50px;top:132.00px;color:#101010;font-weight:bold;letter-spacing:0.071px;">本地磁盘(G:)</div>
<div class="t" style="left:665.30px;top:148.30px;color:#101010;font-weight:bold;letter-spacing:0.500px;">NTFS</div>
<div class="t" style="left:658.00px;top:166.00px;color:#101010;font-weight:bold;">284.0GB</div>
<div class="t" style="left:982.00px;top:132.00px;color:#101010;font-weight:bold;letter-spacing:0.286px;">本地磁盘(H:)</div>
<div class="t" style="left:1001.30px;top:148.30px;color:#101010;font-weight:bold;letter-spacing:0.367px;">NTFS</div>
<div class="t" style="left:994.50px;top:166.00px;color:#101010;font-weight:bold;letter-spacing:-0.100px;">283.5GB</div>
<div class="t" style="left:5.00px;top:191.00px;color:#000;letter-spacing:0.030px;">磁盘1 接口:SATA</div>
<div class="t" style="left:104.40px;top:191.00px;color:#000;letter-spacing:0.248px;">型号:WDCWD10EZEX-60M2NA0</div>
<div class="t" style="left:295.20px;top:191.00px;color:#000;letter-spacing:0.144px;">序列号:WD-WCC3FEHNAKND</div>
<div class="t" style="left:470.50px;top:191.00px;color:#000;letter-spacing:0.126px;">容量:931.5GB(953869MB)</div>
<div class="t" style="left:624.70px;top:191.00px;color:#000;letter-spacing:-0.056px;">柱面数:121601</div>
<div class="t" style="left:714.00px;top:191.00px;color:#000;letter-spacing:-0.017px;">磁头数:255</div>
<div class="t" style="left:781.50px;top:191.00px;color:#000;letter-spacing:-0.100px;">每道扇区数:63</div>
<div class="t" style="left:866.50px;top:191.00px;color:#000;letter-spacing:0.171px;">总扇区数:1953525168</div>
<div class="t" style="left:45.30px;top:220.00px;color:#000;font-weight:bold;letter-spacing:0.304px;z-index:5">HD0:ColorfulSL300128GB(119GB)</div>
<div class="t" style="left:65.00px;top:240.00px;color:#a65f0e;font-weight:bold;letter-spacing:-0.014px;z-index:5">系统文件(C:)</div>
<div class="t" style="left:65.00px;top:260.00px;color:#a65f0e;font-weight:bold;letter-spacing:0.340px;z-index:5">主分区(1)</div>
<div class="t" style="left:65.00px;top:280.00px;color:#0f6a26;font-weight:bold;letter-spacing:-0.033px;z-index:5">扩展分区</div>
<div class="t" style="left:84.00px;top:300.00px;color:#a65f0e;font-weight:bold;letter-spacing:-0.180px;z-index:5">软件(E:)</div>
<div class="t" style="left:45.30px;top:320.00px;color:#000;font-weight:bold;z-index:5;width:224px;overflow:hidden;letter-spacing:0.304px">HD1:WDCWD10EZEX-60M2NA0(932GB)</div>
<div class="t" style="left:65.00px;top:340.00px;color:#a65f0e;font-weight:bold;letter-spacing:0.371px;z-index:5">本地磁盘(D:)</div>
<div class="t" style="left:65.00px;top:360.00px;color:#0f6a26;font-weight:bold;letter-spacing:-0.033px;z-index:5">扩展分区</div>
<div class="t" style="left:84.00px;top:380.00px;color:#a65f0e;font-weight:bold;letter-spacing:-0.114px;z-index:5">本地磁盘(F:)</div>
<div class="t" style="left:84.00px;top:400.00px;color:#a65f0e;font-weight:bold;z-index:5">本地磁盘(G:)</div>
<div class="t" style="left:84.00px;top:420.00px;color:#fff;font-weight:bold;letter-spacing:-0.143px;z-index:5">本地磁盘(H:)</div>
<div class="t" style="left:45.30px;top:440.00px;color:#000;font-weight:bold;letter-spacing:0.220px;z-index:5">RD2:GenericFlashDisk(15GB)</div>
<div class="t" style="left:65.00px;top:460.00px;color:#a65f0e;font-weight:bold;letter-spacing:0.125px;z-index:5">可移动磁盘(I:)</div>
<div class="t" style="left:64.00px;top:480.00px;color:#5644de;font-weight:bold;z-index:5">EFI(J:)</div>
<div class="t" style="left:284.40px;top:217.80px;color:#000;letter-spacing:-0.333px;">分区参数</div>
<div class="t" style="left:344.30px;top:219.50px;color:#000;letter-spacing:-0.233px;">浏览文件</div>
<div class="t" style="left:403.10px;top:219.50px;color:#000;letter-spacing:0.567px;">扇区编辑</div>
<div class="t" style="left:280.80px;top:243.00px;color:#000;">卷标</div>
<div class="t" style="left:473.00px;top:243.00px;color:#000;">序号(状态)</div>
<div class="t" style="left:548.75px;top:243.00px;color:#000;">文件系统</div>
<div class="t" style="left:621.00px;top:243.00px;color:#000;">标识</div>
<div class="t" style="left:672.50px;top:243.00px;color:#000;">起始柱面</div>
<div class="t" style="left:735.50px;top:243.00px;color:#000;">磁头</div>
<div class="t" style="left:775.50px;top:243.00px;color:#000;">扇区</div>
<div class="t" style="left:822.00px;top:243.00px;color:#000;">终止柱面</div>
<div class="t" style="left:886.00px;top:243.00px;color:#000;">磁头</div>
<div class="t" style="left:926.00px;top:243.00px;color:#000;">扇区</div>
<div class="t" style="left:996.50px;top:243.00px;color:#000;">容量</div>
<div class="t" style="left:1033.00px;top:243.00px;color:#000;">属性</div>
<div class="t" style="left:493.00px;top:266.30px;color:#000;font-size:12.5px;">0</div>
<div class="t" style="left:556.75px;top:266.30px;color:#e01818;font-size:12.5px;">NTFS</div>
<div class="t" style="left:626.00px;top:266.30px;color:#000;font-size:12.5px;">07</div>
<div class="t" style="left:712.50px;top:266.30px;color:#a030b0;font-size:12.5px;">0</div>
<div class="t" style="left:745.50px;top:266.30px;color:#a030b0;font-size:12.5px;">32</div>
<div class="t" style="left:785.50px;top:266.30px;color:#a030b0;font-size:12.5px;">33</div>
<div class="t" style="left:835.00px;top:266.30px;color:#a02828;font-size:12.5px;">10443</div>
<div class="t" style="left:889.00px;top:266.30px;color:#a02828;font-size:12.5px;">150</div>
<div class="t" style="left:937.00px;top:266.30px;color:#a02828;font-size:12.5px;">11</div>
<div class="t" style="left:977.50px;top:266.30px;color:#000;font-size:12.5px;">80.0GB</div>
<div class="t" style="left:1049.00px;top:266.30px;color:#000;font-size:12.5px;">A</div>
<div class="t" style="left:492.50px;top:287.30px;color:#000;font-size:12.5px;">1</div>
<div class="t" style="left:547.75px;top:287.30px;color:#000;font-size:12.5px;">EXTEND</div>
<div class="t" style="left:626.00px;top:287.30px;color:#000;font-size:12.5px;">0F</div>
<div class="t" style="left:685.50px;top:287.30px;color:#a030b0;font-size:12.5px;">10443</div>
<div class="t" style="left:738.50px;top:287.30px;color:#a030b0;font-size:12.5px;">150</div>
<div class="t" style="left:785.50px;top:287.30px;color:#a030b0;font-size:12.5px;">12</div>
<div class="t" style="left:828.00px;top:287.30px;color:#a02828;font-size:12.5px;">121601</div>
<div class="t" style="left:896.00px;top:287.30px;color:#a02828;font-size:12.5px;">57</div>
<div class="t" style="left:936.00px;top:287.30px;color:#a02828;font-size:12.5px;">56</div>
<div class="t" style="left:970.50px;top:287.30px;color:#000;font-size:12.5px;">851.5GB</div>
<div class="t" style="left:493.00px;top:308.30px;color:#000;font-size:12.5px;">4</div>
<div class="t" style="left:556.75px;top:308.30px;color:#000;font-size:12.5px;">NTFS</div>
<div class="t" style="left:626.00px;top:308.30px;color:#000;font-size:12.5px;">07</div>
<div class="t" style="left:685.50px;top:308.30px;color:#a030b0;font-size:12.5px;">10443</div>
<div class="t" style="left:738.50px;top:308.30px;color:#a030b0;font-size:12.5px;">182</div>
<div class="t" style="left:785.50px;top:308.30px;color:#a030b0;font-size:12.5px;">44</div>
<div class="t" style="left:835.00px;top:308.30px;color:#a02828;font-size:12.5px;">47517</div>
<div class="t" style="left:889.00px;top:308.30px;color:#a02828;font-size:12.5px;">173</div>
<div class="t" style="left:936.00px;top:308.30px;color:#a02828;font-size:12.5px;">16</div>
<div class="t" style="left:970.50px;top:308.30px;color:#000;font-size:12.5px;">284.0GB</div>
<div class="t" style="left:492.50px;top:329.30px;color:#000;font-size:12.5px;">5</div>
<div class="t" style="left:556.75px;top:329.30px;color:#000;font-size:12.5px;">NTFS</div>
<div class="t" style="left:626.00px;top:329.30px;color:#000;font-size:12.5px;">07</div>
<div class="t" style="left:685.50px;top:329.30px;color:#a030b0;font-size:12.5px;">47517</div>
<div class="t" style="left:738.50px;top:329.30px;color:#a030b0;font-size:12.5px;">205</div>
<div class="t" style="left:785.50px;top:329.30px;color:#a030b0;font-size:12.5px;">49</div>
<div class="t" style="left:835.00px;top:329.30px;color:#a02828;font-size:12.5px;">84591</div>
<div class="t" style="left:889.00px;top:329.30px;color:#a02828;font-size:12.5px;">196</div>
<div class="t" style="left:936.00px;top:329.30px;color:#a02828;font-size:12.5px;">21</div>
<div class="t" style="left:970.50px;top:329.30px;color:#000;font-size:12.5px;">284.0GB</div>
<div class="t" style="left:492.50px;top:350.30px;color:#000;font-size:12.5px;">6</div>
<div class="t" style="left:556.75px;top:350.30px;color:#000;font-size:12.5px;">NTFS</div>
<div class="t" style="left:626.00px;top:350.30px;color:#000;font-size:12.5px;">07</div>
<div class="t" style="left:685.50px;top:350.30px;color:#a030b0;font-size:12.5px;">84591</div>
<div class="t" style="left:738.50px;top:350.30px;color:#a030b0;font-size:12.5px;">228</div>
<div class="t" style="left:785.50px;top:350.30px;color:#a030b0;font-size:12.5px;">54</div>
<div class="t" style="left:828.00px;top:350.30px;color:#a02828;font-size:12.5px;">121601</div>
<div class="t" style="left:896.00px;top:350.30px;color:#a02828;font-size:12.5px;">57</div>
<div class="t" style="left:936.00px;top:350.30px;color:#a02828;font-size:12.5px;">56</div>
<div class="t" style="left:970.50px;top:350.30px;color:#000;font-size:12.5px;">283.5GB</div>
<div class="t" style="left:314.20px;top:266.50px;color:#a65f0e;font-weight:bold;letter-spacing:0.214px;">本地磁盘(D:)</div>
<div class="t" style="left:314.20px;top:287.50px;color:#0f6a26;font-weight:bold;">扩展分区</div>
<div class="t" style="left:330.60px;top:308.50px;color:#a65f0e;font-weight:bold;letter-spacing:-0.171px;">本地磁盘(F:)</div>
<div class="t" style="left:330.60px;top:329.50px;color:#a65f0e;font-weight:bold;letter-spacing:-0.086px;">本地磁盘(G:)</div>
<div class="t" style="left:330.60px;top:350.50px;color:#a65f0e;font-weight:bold;letter-spacing:-0.086px;">本地磁盘(H:)</div>
<div class="t" style="left:280.50px;top:394.60px;color:#1c1c78;letter-spacing:0.150px;">文件系统类型:</div>
<div class="t" style="left:583.50px;top:394.00px;color:#2424c8;font-size:12.5px;">NTFS</div>
<div class="t" style="left:635.00px;top:394.60px;color:#1c1c78;letter-spacing:0.700px;">卷标:</div>
<div class="t" style="left:280.50px;top:419.00px;color:#1c1c78;letter-spacing:-0.091px;">EXTEND起始CHS:</div>
<div class="t" style="left:536.60px;top:419.00px;color:#2424c8;letter-spacing:0.536px;">84591/196/22</div>
<div class="t" style="left:635.00px;top:419.00px;color:#1c1c78;letter-spacing:-0.027px;">EXTEND终止CHS:</div>
<div class="t" style="left:890.00px;top:419.00px;color:#2424c8;letter-spacing:0.727px;">121601/57/56</div>
<div class="t" style="left:281.50px;top:442.50px;color:#1c1c78;letter-spacing:0.100px;">总容量:</div>
<div class="t" style="left:280.50px;top:456.50px;color:#1c1c78;letter-spacing:0.275px;">已用空间:</div>
<div class="t" style="left:280.50px;top:470.50px;color:#1c1c78;letter-spacing:0.433px;">簇大小:</div>
<div class="t" style="left:280.50px;top:484.50px;color:#1c1c78;letter-spacing:0.275px;">已用簇数:</div>
<div class="t" style="left:281.50px;top:498.50px;color:#1c1c78;letter-spacing:0.025px;">总扇区数:</div>
<div class="t" style="left:280.50px;top:512.50px;color:#1c1c78;letter-spacing:0.160px;">起始扇区号:</div>
<div class="t" style="left:280.50px;top:526.50px;color:#1c1c78;letter-spacing:0.350px;">GUID路径:</div>
<div class="t" style="left:281.50px;top:540.50px;color:#1c1c78;letter-spacing:0.025px;">设备路径:</div>
<div class="t" style="left:567.50px;top:442.50px;color:#2424c8;letter-spacing:0.167px;">283.5GB</div>
<div class="t" style="left:575.60px;top:456.50px;color:#2424c8;letter-spacing:-0.020px;">48.1GB</div>
<div class="t" style="left:588.10px;top:470.50px;color:#2424c8;letter-spacing:0.467px;">4096</div>
<div class="t" style="left:559.70px;top:484.50px;color:#2424c8;letter-spacing:0.400px;">12615910</div>
<div class="t" style="left:552.70px;top:498.50px;color:#2424c8;letter-spacing:0.350px;">594554880</div>
<div class="t" style="left:545.60px;top:512.50px;color:#2424c8;letter-spacing:0.433px;">1358968832</div>
<div class="t" style="left:491.50px;top:526.50px;color:#2424c8;letter-spacing:0.474px;">\\?\Volume{fc99a484-0000-0000-0000-7000a2000000}</div>
<div class="t" style="left:491.50px;top:540.50px;color:#2424c8;letter-spacing:0.641px;">\Device\HarddiskVolume7</div>
<div class="t" style="left:636.00px;top:442.50px;color:#1c1c78;letter-spacing:0.250px;">总字节数:</div>
<div class="t" style="left:636.00px;top:456.50px;color:#1c1c78;letter-spacing:0.250px;">可用空间:</div>
<div class="t" style="left:636.00px;top:470.50px;color:#1c1c78;letter-spacing:0.333px;">总簇数:</div>
<div class="t" style="left:635.00px;top:484.50px;color:#1c1c78;letter-spacing:0.500px;">空闲簇数:</div>
<div class="t" style="left:635.00px;top:498.50px;color:#1c1c78;letter-spacing:0.500px;">扇区大小:</div>
<div class="t" style="left:886.00px;top:442.50px;color:#2424c8;letter-spacing:0.455px;">304412098560</div>
<div class="t" style="left:922.30px;top:456.50px;color:#2424c8;letter-spacing:0.283px;">235.4GB</div>
<div class="t" style="left:914.40px;top:470.50px;color:#2424c8;letter-spacing:0.514px;">74319359</div>
<div class="t" style="left:914.40px;top:484.50px;color:#2424c8;letter-spacing:0.514px;">61703449</div>
<div class="t" style="left:914.40px;top:498.50px;color:#2424c8;letter-spacing:0.450px;">512 Bytes</div>
<div class="t" style="left:280.80px;top:564.00px;color:#1c1c78;letter-spacing:0.350px;">卷序列号:</div>
<div class="t" style="left:281.80px;top:578.00px;color:#1c1c78;letter-spacing:-0.017px;">$MFT簇号:</div>
<div class="t" style="left:281.80px;top:592.00px;color:#1c1c78;letter-spacing:0.550px;">$MFTMirr簇号:</div>
<div class="t" style="left:280.80px;top:606.00px;color:#1c1c78;letter-spacing:0.233px;">文件记录大小:</div>
<div class="t" style="left:280.80px;top:620.00px;color:#1c1c78;letter-spacing:0.340px;">卷GUID:</div>
<div class="t" style="left:489.40px;top:564.00px;color:#2424c8;letter-spacing:0.422px;">0000-6784-0000-4823</div>
<div class="t" style="left:635.30px;top:564.00px;color:#1c1c78;letter-spacing:-0.071px;">NTFS版本号:</div>
<div class="t" style="left:954.00px;top:564.00px;color:#2424c8;font-size:12.5px;">3.1</div>
<div class="t" style="left:530.60px;top:578.00px;color:#2424c8;letter-spacing:0.238px;">786432 (柱面:84983 磁头:133 扇区:15)</div>
<div class="t" style="left:550.30px;top:592.00px;color:#2424c8;letter-spacing:0.226px;">2 (柱面:84591 磁头:229 扇区:7)</div>
<div class="t" style="left:588.00px;top:606.00px;color:#2424c8;letter-spacing:0.367px;">1024</div>
<div class="t" style="left:635.30px;top:606.00px;color:#1c1c78;letter-spacing:0.283px;">索引记录大小:</div>
<div class="t" style="left:944.00px;top:606.00px;color:#2424c8;font-size:12.5px;">4096</div>
<div class="t" style="left:490.00px;top:620.00px;color:#2424c8;letter-spacing:0.169px;">23B73BEE-76A0-4335-B5E8-FE29482265BB</div>
<div class="t" style="left:319.30px;top:650.60px;color:#000;letter-spacing:-0.300px;">分析</div>
<div class="t" style="left:386.00px;top:652.60px;color:#1c1c78;letter-spacing:0.357px;">数据分配情况图:</div>
</body></html>
